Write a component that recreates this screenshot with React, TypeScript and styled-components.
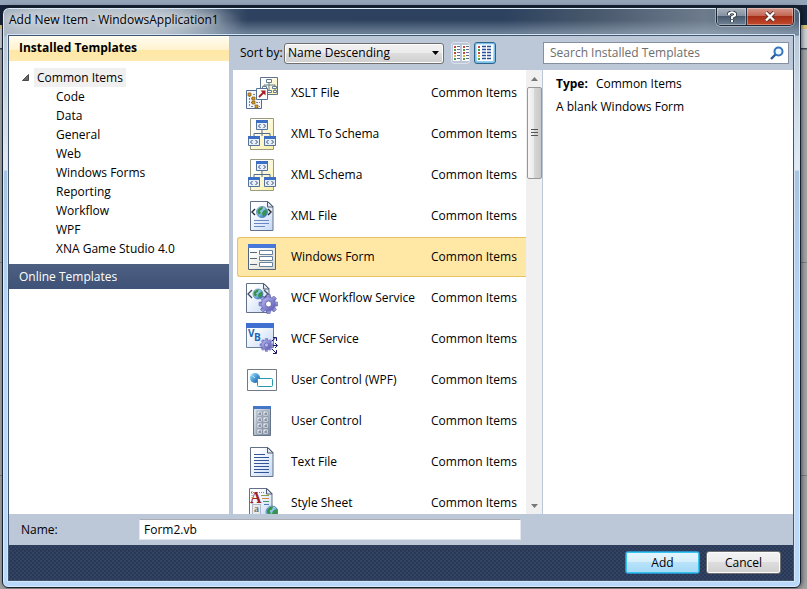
import React, { useState } from 'react';
import styled, { createGlobalStyle, css } from 'styled-components';

const GlobalStyle = createGlobalStyle`
  *, *::before, *::after { box-sizing: border-box; }
  body { margin: 0; }
  body, button, input, select {
    font-family: "Open Sans", "Noto Sans", sans-serif;
    font-size: 12px;
    line-height: 16px;
    color: #000;
  }
  button { padding: 0; border: 0; background: none; text-align: left; }
  ul { margin: 0; padding: 0; list-style: none; }
  h1, h2, p, dl, dd, dt { margin: 0; font-size: 12px; }
`;

const Desktop = styled.div`
  display: flex;
  height: 100vh;
  min-height: 320px;
  padding: 7px 6px 1px 2px;
  background: linear-gradient(
    #93a3b8 0 5px, #17243a 5px 25px, #d9c27e 25px 29px, #c9ccd2 29px 48px,
    #3c4656 48px 49px, #a3a4a6 50px 262px, #808080 262px 263px, #a3a3a3 263px 475px,
    #7c7c7c 475px 476px, #a0a0a0 476px
  );
`;

const Dialog = styled.main`
  flex: 1;
  min-width: 0;
  display: flex;
  flex-direction: column;
  padding: 0 6px 6px 5px;
  border: 1px solid #16212f;
  border-radius: 7px 7px 6px 6px;
  overflow: hidden;
  box-shadow: inset 0 0 0 1px #dcebf8, 1px 0 4px #0008;
  background:
    radial-gradient(ellipse 150px 30px at 90px 14px, #b9c3cd 50%, transparent) no-repeat 0 0 / 100% 28px,
    linear-gradient(transparent 12px, #a9bccd80 25px, #b5c9dc00 30px),
    linear-gradient(#0000 27px, #b9c8d7 28px, #e2ebf4 162px, #a9c3e2 163px, #b9d8fa 330px),
    linear-gradient(90deg, #8797a9, #91a0b0 160px, #2e425f 245px, #2d425f 63%, #48586c 74%, #6d7b8c 88%, #52647a);
`;

const TitleBar = styled.header`
  display: flex;
  justify-content: space-between;
  height: 27px;
  padding-left: 1px;
`;

const Title = styled.h1`
  padding-top: 4px;
  font-weight: 400;
  text-shadow: 0 0 6px #fff9, 0 0 8px #fff9;
`;

const CaptionButtons = styled.div`
  display: flex;
  height: 18px;
  border: 1px solid #1c2736;
  border-top: 0;
  border-radius: 0 0 5px 5px;
  overflow: hidden;
  box-shadow: 0 0 0 1px #cbd7e488;
`;

const CaptionButton = styled.button<{ $close?: boolean }>`
  display: grid;
  place-items: center;
  width: ${p => (p.$close ? 47 : 29)}px;
  box-shadow: inset 0 0 0 1px #ffffff55;
  ${p => p.$close
    ? css`
        border-left: 1px solid #26303c;
        background: linear-gradient(#d49a8d, #c56654 45%, #a62d18 50%, #c44a2b);
      `
    : css`background: linear-gradient(#a9b2bd, #8592a1 45%, #4a5a6e 50%, #718196);`}
`;

const Client = styled.div`
  flex: 1;
  min-height: 0;
  display: flex;
  flex-direction: column;
  border: 1px solid #40566f;
  background: #bcc7d8;
  box-shadow: 0 0 0 1px #d6e6f6;
`;

const Panes = styled.div`
  flex: 1;
  min-height: 0;
  display: grid;
  grid-template-columns: 220px minmax(0, 1fr);
  column-gap: 4px;
`;

const Sidebar = styled.nav`
  background: #fff;
`;

const SidebarHeading = styled.h2`
  height: 25px;
  padding: 4px 10px;
  font-weight: 700;
  background: linear-gradient(#fffcf1, #fff3cf 54%, #ffe8a6 56%, #ffe9ae);
`;

const Tree = styled.ul`
  padding: 7px 0 6px;
`;

const TreeRow = styled.li`
  display: flex;
  align-items: center;
  height: 19px;
`;

const Expander = styled.button`
  display: grid;
  place-items: center;
  width: 9px;
  height: 16px;
  margin: 0 4px 0 12px;
`;

const TreeItem = styled.button<{ $root?: boolean }>`
  height: 19px;
  padding: 0 3px;
  margin-left: ${p => (p.$root ? 0 : 44)}px;
  background: ${p => (p.$root ? '#f0f0f0' : 'transparent')};
`;

const OnlineHeading = styled.button`
  display: block;
  width: 100%;
  height: 25px;
  padding: 0 10px;
  color: #fff;
  background: linear-gradient(#4d6082, #3f5277);
`;

const Browser = styled.section`
  min-width: 0;
  min-height: 0;
  display: grid;
  grid-template: 34px minmax(0, 1fr) / 310px minmax(0, 1fr);
`;

const Toolbar = styled.div`
  display: flex;
  align-items: center;
  padding: 0 0 0 7px;
`;

const SortLabel = styled.label`
  flex: 1;
  white-space: nowrap;
`;

const SelectBox = styled.div`
  display: grid;
  align-items: center;
  width: 160px;
  margin-right: 7px;
  > * { grid-area: 1 / 1; }
  > svg { justify-self: end; margin-right: 5px; pointer-events: none; }
`;

const SortSelect = styled.select`
  appearance: none;
  width: 100%;
  height: 21px;
  padding: 0 3px;
  border: 1px solid #707070;
  border-radius: 3px;
  box-shadow: inset 0 0 0 1px #fcfcfc;
  background: linear-gradient(#f2f2f2, #ebebeb 48%, #dddddd 50%, #cfcfcf);
`;

const ViewButton = styled.button<{ $active?: boolean }>`
  display: grid;
  place-items: center;
  height: 22px;
  border-radius: 3px;
  ${p => p.$active
    ? css`
        width: 22px;
        margin: 0 47px 0 4px;
        border: 1px solid #2c628b;
        box-shadow: inset 0 0 0 1px #7fc0e6;
        background: linear-gradient(#d5effc, #a9dbf5 60%, #8accee);
      `
    : css`
        width: 19px;
        border: 1px solid #dbe1ea;
      `}
`;

const SearchCell = styled.div`
  display: flex;
  align-items: center;
  padding-right: 4px;
`;

const SearchField = styled.label`
  flex: 1;
  min-width: 0;
  display: flex;
  align-items: center;
  height: 22px;
  padding: 0 4px 0 6px;
  border: 1px solid #8591a2;
  background: #fff;
`;

const SearchInput = styled.input`
  flex: 1;
  min-width: 0;
  padding: 0;
  border: 0;
  outline: 0;
  background: none;
  &::placeholder { color: #6d6d6d; opacity: 1; }
`;

const ListPane = styled.div`
  display: flex;
  min-height: 0;
  background: #fff;
  overflow: hidden;
`;

const TemplateList = styled.ul`
  flex: 1;
  min-width: 0;
  padding: 3px 0 0 4px;
`;

const TemplateRow = styled.button<{ $selected: boolean }>`
  display: grid;
  grid-template-columns: 45px 140px minmax(0, 1fr);
  align-items: center;
  width: 100%;
  height: 40px;
  margin-bottom: 1px;
  padding-left: 8px;
  white-space: nowrap;
  border: 1px solid transparent;
  border-right: 0;
  border-radius: 3px 0 0 3px;
  ${p => p.$selected && css`
    border-color: #e5c365;
    background: #ffe8a6;
  `}
`;

const ScrollTrack = styled.div`
  display: flex;
  flex-direction: column;
  align-items: center;
  width: 17px;
  border-right: 1px solid #bcc7d8;
  background: #f0f0f0;
`;

const ScrollButton = styled.button`
  display: grid;
  place-items: center;
  width: 16px;
  height: 17px;
`;

const ScrollThumb = styled.div`
  display: grid;
  place-items: center;
  width: 15px;
  height: 92px;
  margin-bottom: auto;
  border: 1px solid #979797;
  border-radius: 2px;
  background: linear-gradient(90deg, #f7f7f7, #eaeaea 45%, #d6d6d6 50%, #c8c8c8);
`;

const Details = styled.aside`
  padding: 6px 13px;
  background: #fff;
`;

const TypeLine = styled.dl`
  display: flex;
  gap: 8px;
  margin-bottom: 7px;
  dt { font-weight: 700; }
`;

const NameRow = styled.div`
  display: grid;
  grid-template-columns: 118px minmax(0, 382px);
  align-items: center;
  height: 31px;
  padding-left: 12px;
`;

const NameInput = styled.input`
  width: 100%;
  height: 21px;
  padding: 0 4px;
  border: 1px solid #e3e7ee;
  border-top-color: #abadb3;
  background: #fff;
`;

const Footer = styled.footer`
  display: flex;
  justify-content: flex-end;
  gap: 6px;
  height: 35px;
  padding: 6px 12px 0 0;
  background-color: #293955;
  background-image:
    radial-gradient(circle, #324363 1px, transparent 1px),
    radial-gradient(circle, #324363 1px, transparent 1px);
  background-size: 4px 4px;
  background-position: 0 0, 2px 2px;
`;

const PushButton = styled.button<{ $primary?: boolean }>`
  width: 75px;
  height: 23px;
  text-align: center;
  border-radius: 3px;
  ${p => p.$primary
    ? css`
        border: 1px solid #2a8dc4;
        box-shadow: inset 0 0 0 1px #35c5f0;
        background: linear-gradient(#e6f5fc, #d5effc 48%, #b8e3fa 50%, #a4d9f5);
      `
    : css`
        border: 1px solid #707070;
        box-shadow: inset 0 0 0 1px #fcfcfc;
        background: linear-gradient(#f3f3f3, #ebebeb 48%, #dddddd 50%, #cfcfcf);
      `}
`;

const Globe = ({ x, y, r = 5 }: { x: number; y: number; r?: number }) => (
  <g transform={`translate(${x} ${y}) scale(${r / 5})`}>
    <circle r="5" fill="url(#globe)" stroke="#3569a5" strokeWidth=".6" />
    <path d="M-4-2Q-2-5 1-4.4L0-2-2-1-1 1-3 2.5-4.4 0Z M1-1 4-2.5Q5 0 3.5 2.5L1 4 0 1.5Z" fill="#359447" />
  </g>
);

const Page = ({ x = 4 }: { x?: number }) => (
  <g transform={`translate(${x} 0)`}>
    <path d="M.5 1.5H18L23 6.5V30.5H.5Z" fill="url(#paper)" stroke="#647087" />
    <path d="M17.5 1.5V7H23Z" fill="#dfe7f2" stroke="#4e5b72" />
  </g>
);

const Gear = ({ x, y, r, hub }: { x: number; y: number; r: number; hub: string }) => (
  <g transform={`translate(${x} ${y}) scale(${r / 10})`}>
    {[0, 45, 90, 135, 180, 225, 270, 315].map(a => (
      <path key={a} d="M-2.6-6-1.7-10H1.7L2.6-6Z" transform={`rotate(${a})`} fill="url(#gear)" stroke="#4b4b9c" strokeWidth=".6" />
    ))}
    <circle r="7.2" fill="url(#gear)" />
    <circle r="3.2" fill={hub} stroke="#4b4b9c" strokeWidth=".8" />
  </g>
);

const CodeWindow = ({ x, y }: { x: number; y: number }) => (
  <g transform={`translate(${x} ${y})`}>
    <path d="M.5.5H11.5V9.5H.5Z" fill="#e6f0fc" stroke="#55729f" />
    <path d="M0 0H12V3H0Z" fill="#3d6fc4" />
    <path d="M4.5 4 2.5 6 4.5 8M7.5 4 9.5 6 7.5 8" fill="none" stroke="#34496b" />
  </g>
);

const Schema = () => (
  <>
    <path d="M4.5.5H27.5V31.5H4.5Z" fill="url(#cream)" stroke="#9a9a80" />
    <path d="M16 12V18M8 18V15.5H24V18" fill="none" stroke="#536d8d" />
    <CodeWindow x={10} y={2} />
    <CodeWindow x={2} y={18} />
    <CodeWindow x={18} y={18} />
  </>
);

const icons = {
  xslt: (
    <>
      <path d="M14.5.5H31.5V17.5H14.5Z" fill="url(#cream)" stroke="#60758d" />
      <path d="M23 5V8M18 11V8H29V11M23 8V13M29 12V14" fill="none" stroke="#647c91" />
      <path d="M20.5 2.5H25.5V5.5H20.5ZM16.5 9.5H20.5V11.5H16.5ZM26.5 9.5H30.5V11.5H26.5ZM21.5 13.5H25.5V15.5H21.5ZM27.5 13.5H30.5V15.5H27.5Z" fill="#fff" stroke="#647c91" />
      <path d="M.5 13.5H15.5V31.5H.5Z" fill="#f3f7fd" stroke="#536c90" />
      <path d="M3.5 18V29.5M5 21.5H8M5 25.5H8M5 29.5H8M10 25.5H14M10 29.5H14M7 17.5H11" fill="none" stroke="#7a8496" strokeDasharray="2 1" />
      <path d="M2 16H5V19H2ZM6 20H9V23H6ZM6 24H9V27H6ZM9 28H12V31H9Z" fill="#d99a23" stroke="#81601d" strokeWidth=".7" />
      <path d="M10.5 11.5H21.5V22.5H10.5Z" fill="#fff" stroke="#557397" />
      <path d="M13 20 18 15" stroke="#a81d24" strokeWidth="1.8" />
      <path d="M14.5 13.5H19.5V18.5Z" fill="#a81d24" />
    </>
  ),
  schema: <Schema />,
  xml: (
    <>
      <Page />
      <Globe x={16} y={12} r={5.5} />
      <path d="M9 9 6 12 9 15M22 9 25 12 22 15" fill="none" stroke="#1d2937" strokeWidth="1.4" />
      <path d="M8 20.5H23M8 23.5H23M8 26.5H19" stroke="#6688c5" />
    </>
  ),
  form: (
    <>
      <path d="M2.5 3.5H29.5V28.5H2.5Z" fill="url(#form)" stroke="#53647e" />
      <path d="M2 3H30V7H2Z" fill="#4777d8" />
      <path d="M4 11.5H11M4 17.5H11M4 23.5H11" stroke="#52677d" />
      <path d="M13.5 9.5H26.5V13.5H13.5ZM13.5 15.5H26.5V19.5H13.5ZM13.5 21.5H26.5V25.5H13.5Z" fill="#fff" stroke="#6682a3" />
    </>
  ),
  workflow: (
    <>
      <Page x={0} />
      <Globe x={12} y={12} />
      <path d="M6 8 2 12 6 16M18 8 22 12 18 16" fill="none" stroke="#445266" strokeWidth="1.4" />
      <Gear x={22.5} y={22} r={9.5} hub="#fff" />
    </>
  ),
  service: (
    <>
      <path d="M.5.5H27.5V24.5H.5Z" fill="url(#paper)" stroke="#6b7f9d" />
      <path d="M0 0H28V5H0Z" fill="#3f70d1" />
      <text x="2" y="14" fontSize="10" fontWeight="700" fill="#1765b5">V</text>
      <text x="8" y="18" fontSize="10" fontWeight="700" fill="#1765b5">B</text>
      <Gear x={20.5} y={22} r={6.5} hub="#b7b8e5" />
      <path d="M26 18 30 14.5M27 22.5H31M26 26 30 30M27 14.5H30.5V18M29 20 31.5 22.5 29 25M30.5 27V30.5H27" fill="none" stroke="#18186f" />
    </>
  ),
  wpf: (
    <>
      <path d="M1.5 5.5H30.5V26.5H1.5Z" fill="#fcfdfd" stroke="#727983" />
      <circle cx="9" cy="14" r="5" fill="url(#ball)" />
      <path d="M9 14 4.5 10" stroke="#bde3f8" />
      <rect x="11.5" y="14.5" width="15" height="8" rx="1" fill="#fff" stroke="#2899ad" />
    </>
  ),
  control: (
    <>
      <path d="M7.5 1.5H24.5V30.5H7.5Z" fill="url(#metal)" stroke="#64748b" />
      <path d="M7 1H25V4H7Z" fill="#4476c8" />
      {[6, 12, 18, 24].map(y => [11, 17].map(x => (
        <g key={`${x}-${y}`}>
          <rect x={x} y={y} width="5" height="5" fill="#e9edf3" stroke="#788396" strokeWidth=".6" />
          <path d={`M${x + 1} ${y + 3}H${x + 4}M${x + 3} ${y + 1}V${y + 4}`} stroke="#59657a" strokeWidth=".8" />
        </g>
      )))}
    </>
  ),
  text: (
    <>
      <Page />
      <path d="M8 8.5H19M8 11.5H23M8 14.5H23M8 17.5H23M8 20.5H23M8 23.5H23M8 26.5H23" stroke="#34549a" />
    </>
  ),
  style: (
    <>
      <Page x={3} />
      <path d="M5 5.5H18M6 4V18" stroke="#77869e" strokeDasharray="1 1" />
      <path d="M15 8.5H23" stroke="#8d9d4c" />
      <path d="M16 11.5H23" stroke="#d88a44" />
      <path d="M17 14.5H23" stroke="#4b9a62" />
      <path d="M18 17.5H23" stroke="#497ebc" />
      <text x="4" y="16" fontFamily="Liberation Serif, serif" fontSize="16" fontWeight="700" fill="#9d2028">A</text>
      <path d="M6.5 17.5H14.5V27.5H6.5Z" fill="#e8eaee" stroke="#7a8597" strokeDasharray="1 1" />
      <text x="8" y="25" fontFamily="Liberation Serif, serif" fontSize="10" fontWeight="700" fill="#777">a</text>
      <Globe x={26} y={25} r={6} />
    </>
  ),
};

const gradients: [string, string, string][] = [
  ['paper', '#ffffff', '#c5d8f7'],
  ['cream', '#ffffff', '#f9efa0'],
  ['form', '#ffffff', '#d7d6c9'],
  ['globe', '#bde9ff', '#1d68b7'],
  ['gear', '#a6a6e5', '#5756ae'],
  ['metal', '#d5dee9', '#7f8c9e'],
  ['ball', '#78c8f2', '#064f9d'],
];

const GradientStore = styled.svg`
  position: absolute;
  width: 0;
  height: 0;
`;

const templates: [string, keyof typeof icons][] = [
  ['XSLT File', 'xslt'],
  ['XML To Schema', 'schema'],
  ['XML Schema', 'schema'],
  ['XML File', 'xml'],
  ['Windows Form', 'form'],
  ['WCF Workflow Service', 'workflow'],
  ['WCF Service', 'service'],
  ['User Control (WPF)', 'wpf'],
  ['User Control', 'control'],
  ['Text File', 'text'],
  ['Style Sheet', 'style'],
];

const categories = ['Code', 'Data', 'General', 'Web', 'Windows Forms', 'Reporting', 'Workflow', 'WPF', 'XNA Game Studio 4.0'];

const viewRows = [1, 4, 7, 10, 13];
const dotColors = ['#c8433c', '#4c9a4a', '#c8433c', '#d9b23a', '#4c9a4a'];

export default function App() {
  const [selected, setSelected] = useState('Windows Form');

  return (
    <Desktop>
      <GlobalStyle />
      <GradientStore aria-hidden="true">
        <defs>
          {gradients.map(([id, from, to]) => (
            <linearGradient key={id} id={id} x1="0" y1="0" x2="1" y2="1">
              <stop offset=".2" stopColor={from} />
              <stop offset="1" stopColor={to} />
            </linearGradient>
          ))}
        </defs>
      </GradientStore>
      <Dialog>
        <TitleBar>
          <Title>Add New Item - WindowsApplication1</Title>
          <CaptionButtons>
            <CaptionButton aria-label="Help">
              <svg width="10" height="12" viewBox="0 0 10 12" fill="none">
                <path d="M2 4V2.5Q5 0 8 2.5V4.5L5 6V8M5 9V11" stroke="#303945" strokeWidth="3.6" />
                <path d="M2 4V2.5Q5 0 8 2.5V4.5L5 6V8M5 9V11" stroke="#fff" strokeWidth="2" />
              </svg>
            </CaptionButton>
            <CaptionButton $close aria-label="Close">
              <svg width="12" height="11" viewBox="0 0 12 11">
                <path d="M2 1.5 10 9.5M10 1.5 2 9.5" stroke="#55332f" strokeWidth="4" />
                <path d="M2 1.5 10 9.5M10 1.5 2 9.5" stroke="#fff" strokeWidth="2.4" />
              </svg>
            </CaptionButton>
          </CaptionButtons>
        </TitleBar>
        <Client>
          <Panes>
            <Sidebar aria-label="Template categories">
              <SidebarHeading>Installed Templates</SidebarHeading>
              <Tree>
                <TreeRow>
                  <Expander aria-label="Collapse Common Items">
                    <svg width="7" height="7" viewBox="0 0 7 7"><path d="M6.5.5V6.5H.5Z" fill="#6a6a6a" stroke="#4a4a4a" /></svg>
                  </Expander>
                  <TreeItem $root>Common Items</TreeItem>
                </TreeRow>
                {categories.map(name => (
                  <TreeRow key={name}><TreeItem>{name}</TreeItem></TreeRow>
                ))}
              </Tree>
              <OnlineHeading>Online Templates</OnlineHeading>
            </Sidebar>
            <Browser>
              <Toolbar>
                <SortLabel htmlFor="sort">Sort by:</SortLabel>
                <SelectBox>
                  <SortSelect id="sort" defaultValue="Name Descending">
                    <option>Name Descending</option>
                    <option>Name Ascending</option>
                    <option>Default</option>
                  </SortSelect>
                  <svg width="7" height="4" viewBox="0 0 7 4"><path d="M0 0H7L3.5 4Z" fill="#000" /></svg>
                </SelectBox>
                <ViewButton aria-label="Small icons">
                  <svg width="16" height="16" viewBox="0 0 16 16">
                    <path d="M0 0H7V16H0ZM9 0H16V16H9Z" fill="#fff" />
                    {viewRows.map((y, i) => (
                      <g key={y}>
                        <path d={`M1 ${y}H3V${y + 2}H1ZM10 ${y}H12V${y + 2}H10Z`} fill={dotColors[i]} />
                        <path d={`M4 ${y + 0.5}H7M13 ${y + 0.5}H16`} stroke="#5c6d8e" />
                      </g>
                    ))}
                  </svg>
                </ViewButton>
                <ViewButton $active aria-label="Medium icons" aria-pressed="true">
                  <svg width="16" height="16" viewBox="0 0 16 16">
                    <path d="M0 0H16V16H0Z" fill="#fff" />
                    {viewRows.map((y, i) => (
                      <g key={y}>
                        <path d={`M1 ${y}H3V${y + 2}H1Z`} fill={dotColors[i]} />
                        <path d={`M5 ${y + 0.5}H9M10 ${y + 0.5}H14`} stroke="#274d9c" strokeWidth="1.5" />
                      </g>
                    ))}
                  </svg>
                </ViewButton>
              </Toolbar>
              <SearchCell>
                <SearchField>
                  <SearchInput aria-label="Search Installed Templates" placeholder="Search Installed Templates" />
                  <svg width="14" height="14" viewBox="0 0 14 14" fill="none">
                    <path d="M1 13 6 8" stroke="#2c5b98" strokeWidth="2.4" />
                    <circle cx="8.5" cy="5.5" r="4" fill="#edf7ff" stroke="#3475bb" strokeWidth="2" />
                  </svg>
                </SearchField>
              </SearchCell>
              <ListPane>
                <TemplateList>
                  {templates.map(([name, icon]) => (
                    <li key={name}>
                      <TemplateRow
                        $selected={name === selected}
                        aria-pressed={name === selected}
                        onClick={() => setSelected(name)}
                      >
                        <svg width="32" height="32" viewBox="0 0 32 32">{icons[icon]}</svg>
                        <span>{name}</span>
                        <span>Common Items</span>
                      </TemplateRow>
                    </li>
                  ))}
                </TemplateList>
                <ScrollTrack>
                  <ScrollButton aria-label="Scroll up">
                    <svg width="7" height="4" viewBox="0 0 7 4"><path d="M0 4H7L3.5 0Z" fill="#777" /></svg>
                  </ScrollButton>
                  <ScrollThumb>
                    <svg width="7" height="8" viewBox="0 0 7 8"><path d="M0 .5H7M0 3.5H7M0 6.5H7" stroke="#555" /></svg>
                  </ScrollThumb>
                  <ScrollButton aria-label="Scroll down">
                    <svg width="7" height="4" viewBox="0 0 7 4"><path d="M0 0H7L3.5 4Z" fill="#777" /></svg>
                  </ScrollButton>
                </ScrollTrack>
              </ListPane>
              <Details>
                <TypeLine><dt>Type:</dt><dd>Common Items</dd></TypeLine>
                <p>A blank Windows Form</p>
              </Details>
            </Browser>
          </Panes>
          <NameRow>
            <label htmlFor="item-name">Name:</label>
            <NameInput id="item-name" defaultValue="Form2.vb" />
          </NameRow>
          <Footer>
            <PushButton $primary>Add</PushButton>
            <PushButton>Cancel</PushButton>
          </Footer>
        </Client>
      </Dialog>
    </Desktop>
  );
}
